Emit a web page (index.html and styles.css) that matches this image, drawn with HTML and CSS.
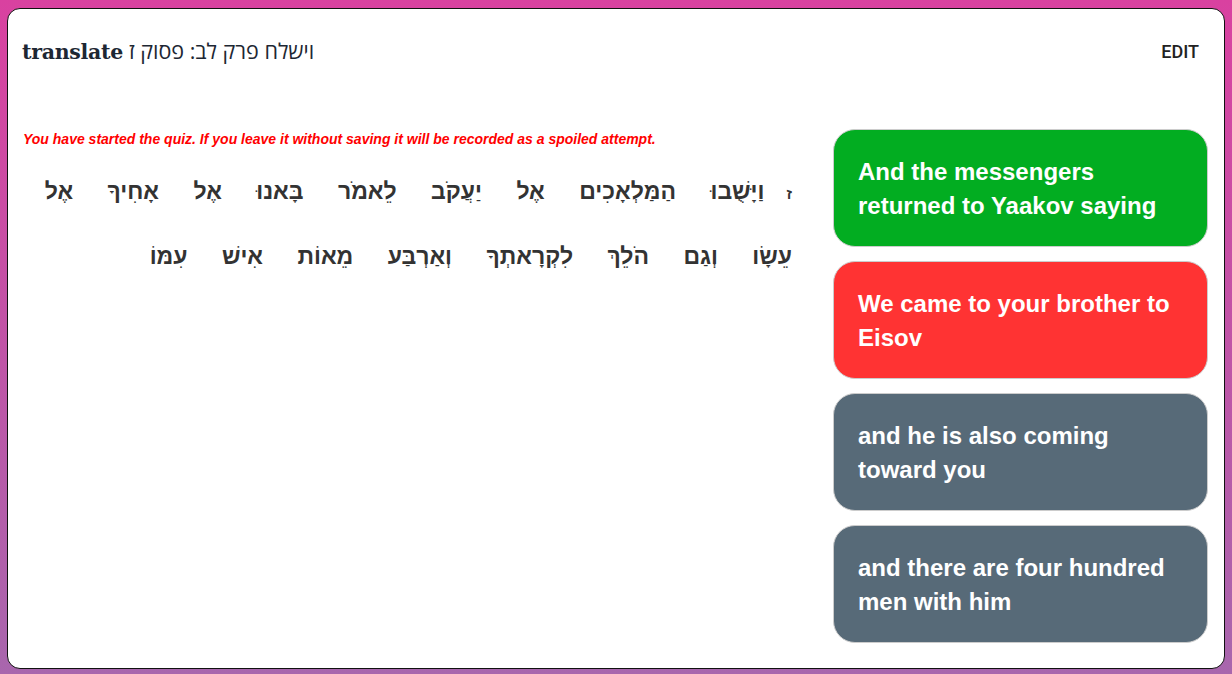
FILE: index.html
```html
<!DOCTYPE html>
<html>
<head>
<meta charset="utf-8">
<link rel="stylesheet" href="styles.css">
</head>
<body>
<div class="card">
  <div class="header">
    <h1 class="title"><span class="title-en">translate</span> <span class="title-he">וישלח פרק לב: פסוק ז</span></h1>
    <span class="edit">EDIT</span>
  </div>
  <div class="main">
    <div class="left">
      <p class="warning">You have started the quiz. If you leave it without saving it will be recorded as a spoiled attempt.</p>
      <div class="verse" dir="rtl"><span class="num">ז</span><span class="w">וַיָּשֻׁבוּ</span> <span class="w">הַמַּלְאָכִים</span> <span class="w">אֶל</span> <span class="w">יַעֲקֹב</span> <span class="w">לֵאמֹר</span> <span class="w">בָּאנוּ</span> <span class="w">אֶל</span> <span class="w">אָחִיךָ</span> <span class="w">אֶל</span> <span class="w">עֵשָׂו</span> <span class="w">וְגַם</span> <span class="w">הֹלֵךְ</span> <span class="w">לִקְרָאתְךָ</span> <span class="w">וְאַרְבַּע</span> <span class="w">מֵאוֹת</span> <span class="w">אִישׁ</span> <span class="w">עִמּוֹ</span></div>
    </div>
    <div class="right">
      <div class="opt green">And the messengers returned to Yaakov saying</div>
      <div class="opt red">We came to your brother to Eisov</div>
      <div class="opt gray">and he is also coming toward you</div>
      <div class="opt gray">and there are four hundred men with him</div>
    </div>
  </div>
</div>
</body>
</html>
```
FILE: styles.css
```css
html, body {
  margin: 0;
  padding: 0;
  height: 100%;
}
body {
  background: linear-gradient(180deg, #d941a0 0%, #a866ad 100%);
  padding: 8px 7px 5px 7px;
  box-sizing: border-box;
  font-family: "Liberation Sans", Arial, sans-serif;
}
.card {
  background: #fff;
  border: 1px solid #111;
  border-radius: 13px;
  height: 661px;
  box-sizing: border-box;
  display: flex;
  flex-direction: column;
}
.header {
  display: flex;
  justify-content: space-between;
  align-items: center;
  padding: 27px 25px 0 14px;
}
.title {
  margin: 0;
  font-weight: normal;
  color: #1d2733;
  line-height: 30px;
  display: flex;
  align-items: baseline;
  gap: 6px;
}
.title-en {
  font-family: "DejaVu Serif", serif;
  font-weight: bold;
  font-size: 20.5px;
  letter-spacing: -0.3px;
}
.title-he {
  font-family: "Open Sans", "Liberation Sans", sans-serif;
  font-size: 21.5px;
}
.edit {
  font-family: Roboto, sans-serif;
  font-weight: 500;
  font-size: 18px;
  color: #222;
}
.main {
  display: flex;
  gap: 26px;
  padding: 0 16px 0 15px;
  margin-top: 62px;
}
.left {
  flex: 1;
  min-width: 0;
}
.warning {
  margin: 3px 0 0 0;
  color: #f00;
  font-size: 14px;
  font-weight: bold;
  font-style: italic;
  line-height: 14px;
}
.verse {
  margin-top: 14px;
  text-align: right;
  line-height: 62px;
  color: #333;
  font-weight: bold;
  font-size: 23px;
  word-spacing: 28px;
  padding-right: 15px;
}
.num {
  display: inline-block;
  font-size: 15px;
  margin-left: 22px;
}
.w {
  display: inline-block;
  word-spacing: normal;
}
.right {
  width: 375px;
  flex: none;
  display: flex;
  flex-direction: column;
  gap: 14px;
}
.opt {
  border: 1px solid #ccc;
  border-radius: 22px;
  padding: 25px 23px 23px 24px;
  color: #fff;
  font-weight: bold;
  font-size: 24px;
  line-height: 34px;
  min-height: 68px;
}
.green { background: #02ad21; }
.red { background: #ff3333; }
.gray { background: #576a78; }
```
